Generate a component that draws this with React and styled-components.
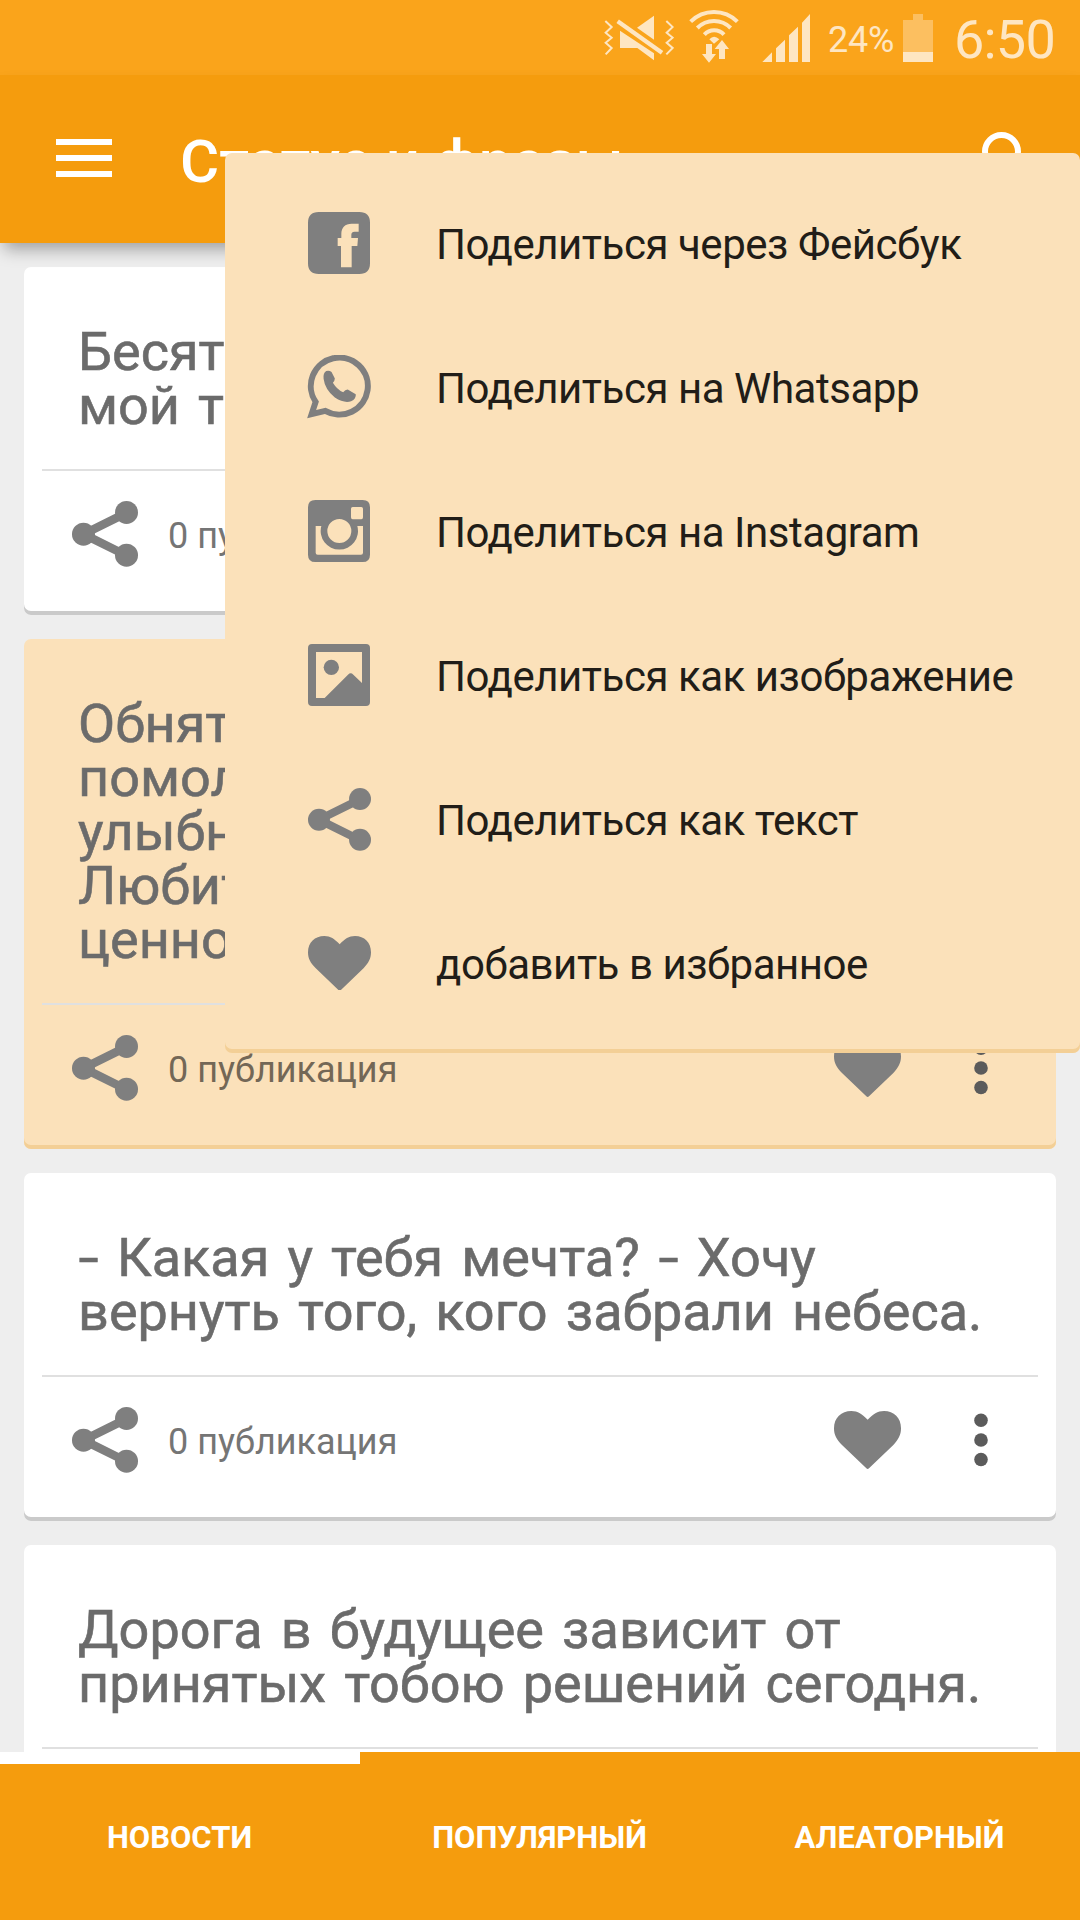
import React from 'react'
import styled, { createGlobalStyle } from 'styled-components'

const cards = [
  { id: 1, lines: ['Бесят', 'мой т'] },
  { id: 2, lines: ['Обнять', 'помолчать', 'улыбнуться', 'Любить', 'ценно'], selected: true },
  { id: 3, lines: ['- Какая у тебя мечта? - Хочу', 'вернуть того, кого забрали небеса.'] },
  { id: 4, lines: ['Дорога в будущее зависит от', 'принятых тобою решений сегодня.'] },
];

const tabs = ['НОВОСТИ', 'ПОПУЛЯРНЫЙ', 'АЛЕАТОРНЫЙ'];

const MuteIcon = () => (
  <svg width="70" height="46" viewBox="72 42 210 138" fill="#fee6c2">
    <g fill="none" stroke="#fee6c2" strokeWidth="6">
      <path d="M76 60 95 78 77 95 95 110 77 125 95 141 77 160" />
      <path d="M259 60 278 78 260 95 278 110 260 125 278 141 259 160" />
    </g>
    <path d="M171 80 222 44V116Z" />
    <path d="M120 89 222 157V178L172 141H120Z" />
    <path d="M113 61 246 155" stroke="#fee6c2" strokeWidth="13" />
  </svg>
);

const WifiIcon = () => (
  <svg width="50" height="54" viewBox="327 27 150 162" fill="#fee6c2">
    <g fill="none" stroke="#fee6c2" strokeWidth="12">
      <path d="M332 65A99 99 0 0 1 472 65" />
      <path d="M352 84A70 70 0 0 1 452 84" />
      <path d="M373 104A40 40 0 0 1 432 104" />
    </g>
    <path d="M388 118Q402 103 418 118L402 131Z" />
    <path d="M378 132H396V162H408L387 188 366 162H378Z" />
    <path d="M426 120 447 147H435V177H417V147H404Z" />
  </svg>
);

const SignalIcon = () => (
  <svg width="48" height="48" viewBox="546 39 144 144" fill="#fee6c2">
    <path d="M547 183 576 154V183ZM588 183V142L615 116V183ZM627 183V103L654 77V183ZM666 183V65L690 39V183Z" />
  </svg>
);

const BatteryIcon = () => (
  <svg width="30" height="48" viewBox="0 0 30 48">
    <path d="M10 0H20V6H30V38H0V6H10Z" fill="#fcbf60" />
    <path d="M0 38H30V48H0Z" fill="#fee6c2" />
  </svg>
);

const SearchIcon = () => (
  <svg width="72" height="72" viewBox="0 0 24 24" fill="#ffffff">
    <path d="M15.5 14h-.79l-.28-.27A6.471 6.471 0 0 0 16 9.5 6.5 6.5 0 1 0 9.5 16c1.61 0 3.09-.59 4.23-1.57l.27.28v.79l5 4.99L20.49 19l-4.99-5zm-6 0C7.01 14 5 11.99 5 9.5S7.01 5 9.5 5 14 7.01 14 9.5 11.99 14 9.5 14z" />
  </svg>
);

const ShareIcon = ({ size }) => (
  <svg width={size} height={size} viewBox="0 0 201 201" fill="#7f7f7f">
    <path d="M166 36 35 101 166 166" fill="none" stroke="#7f7f7f" strokeWidth="26" />
    <circle cx="35" cy="101" r="35" />
    <circle cx="166" cy="35" r="35" />
    <circle cx="166" cy="165" r="35" />
  </svg>
);

const HeartIcon = ({ width }) => (
  <svg width={width} height={width * 174 / 201} viewBox="0 0 201 174" fill="#7f7f7f">
    <path d="M105 172Q101 176 97 172L24 102C8 86 0 72 0 52 0 20 22 0 52 0 72 0 84 9 101 26 118 9 130 0 150 0 180 0 201 20 201 52 201 72 193 86 178 102Z" />
  </svg>
);

const MoreIcon = () => (
  <svg width="14" height="54" viewBox="0 0 14 54" fill="#5b5b5b">
    <circle cx="7" cy="7.3" r="6.8" />
    <circle cx="7" cy="27" r="6.8" />
    <circle cx="7" cy="46.5" r="6.8" />
  </svg>
);

const FacebookIcon = () => (
  <svg width="62" height="62" viewBox="0 0 186 186" fill="#7f7f7f" fillRule="evenodd">
    <path d="M32 0H154Q186 0 186 32V154Q186 186 154 186H32Q0 186 0 154V32Q0 0 32 0ZM99 102H89V78H100V66C100 46 111 35 131 35H152V59H140C132 59 130 63 130 69V78H150L148 102H131V166H99Z" />
  </svg>
);

const WhatsappIcon = () => (
  <svg width="64" height="64" viewBox="260 645 193 192" fill="#7f7f7f">
    <path d="M286 786A86 86 0 1 1 315 813L274 823Z" fill="none" stroke="#7f7f7f" strokeWidth="18" />
    <path d="M318 693Q327 690 334 696L344 715Q344 721 338 728 350 748 369 757 376 748 384 749L407 763Q409 777 393 784 372 791 344 773 314 748 310 716 308 700 318 693Z" />
  </svg>
);

const InstagramIcon = () => (
  <svg width="62" height="62" viewBox="0 0 186 186" fill="#7f7f7f" fillRule="evenodd">
    <path d="M22 0H164Q186 0 186 22V164Q186 186 164 186H22Q0 186 0 164V22Q0 0 22 0ZM134 21H160Q165 21 165 26V52Q165 58 160 58H134Q129 58 129 52V26Q129 21 134 21ZM23 78H40A56 56 0 1 0 148 78H165V158Q165 164 159 164H29Q23 164 23 158ZM94 57A36 36 0 1 0 94 129 36 36 0 1 0 94 57Z" />
  </svg>
);

const ImageIcon = () => (
  <svg width="62" height="62" viewBox="0 0 186 186" fill="#7f7f7f" fillRule="evenodd">
    <path d="M12 0H174Q186 0 186 12V174Q186 186 174 186H12Q0 186 0 174V12Q0 0 12 0ZM24 24V162H50L120 92Q128 84 136 92L162 117V24Z" />
    <circle cx="70" cy="70" r="23" />
  </svg>
);

const menuItems = [
  { label: 'Поделиться через Фейсбук', icon: <FacebookIcon /> },
  { label: 'Поделиться на Whatsapp', icon: <WhatsappIcon /> },
  { label: 'Поделиться на Instagram', icon: <InstagramIcon /> },
  { label: 'Поделиться как изображение', icon: <ImageIcon /> },
  { label: 'Поделиться как текст', icon: <ShareIcon size={63} /> },
  { label: 'добавить в избранное', icon: <HeartIcon width={63} /> },
];

const QuoteLine = ({ text }) => (
  <span>
    {text.split(/(-)/).map((part, i) => (part === '-' ? <Dash key={i}>-</Dash> : part))}
  </span>
);

const QuoteCard = ({ lines, selected }) => (
  <Card $selected={selected}>
    <Quote>
      {lines.map((line) => <QuoteLine key={line} text={line} />)}
    </Quote>
    <CardFooter>
      <ShareIcon size={66} />
      <ShareCount>0 публикация</ShareCount>
      <HeartIcon width={67} />
      <MoreBox><MoreIcon /></MoreBox>
    </CardFooter>
  </Card>
);

const App = () => {
  return (
    <Screen>
      <GlobalStyle />
      <StatusBar>
        <MuteIcon />
        <WifiBox><WifiIcon /></WifiBox>
        <SignalBox><SignalIcon /></SignalBox>
        <BatteryText>24%</BatteryText>
        <BatteryIcon />
        <Clock>6:50</Clock>
      </StatusBar>
      <AppBar>
        <Hamburger><i /><i /><i /></Hamburger>
        <Title>Статус и фразы</Title>
        <SearchIcon />
      </AppBar>
      <Feed>
        {cards.map((card) => <QuoteCard key={card.id} {...card} />)}
      </Feed>
      <TabBar>
        {tabs.map((tab, i) => <Tab key={tab} $active={i === 0}>{tab}</Tab>)}
      </TabBar>
      <Menu>
        {menuItems.map(({ label, icon }) => (
          <MenuItem key={label}>
            <MenuIcon>{icon}</MenuIcon>
            <MenuLabel>{label}</MenuLabel>
          </MenuItem>
        ))}
      </Menu>
    </Screen>
  )
}

export default App

const GlobalStyle = createGlobalStyle`
  * {
    box-sizing: border-box;
  }
  body {
    margin: 0;
    font-family: Roboto, 'Noto Sans', sans-serif;
  }
  svg {
    display: block;
    flex-shrink: 0;
  }
`;

const Screen = styled.div`
  width: 1080px;
  height: 1920px;
  position: relative;
  display: flex;
  flex-direction: column;
  overflow: hidden;
  background-color: #eeeeee;
`;

const StatusBar = styled.div`
  height: 75px;
  flex-shrink: 0;
  display: flex;
  justify-content: flex-end;
  align-items: center;
  padding-right: 25px;
  background-color: #faa41b;
  color: #fee6c2;
  white-space: nowrap;
`;

const WifiBox = styled.div`
  margin: 0 23px 3px 15px;
`;

const SignalBox = styled.div`
  margin-right: 18px;
`;

const BatteryText = styled.span`
  width: 75px;
  font-size: 36px;
  line-height: 42px;
  padding-top: 4px;
  letter-spacing: -0.2px;
`;

const Clock = styled.span`
  width: 101px;
  margin-left: 21px;
  font-size: 54px;
  line-height: 60px;
  padding-top: 4px;
  letter-spacing: -0.8px;
`;

const AppBar = styled.div`
  height: 168px;
  flex-shrink: 0;
  position: relative;
  z-index: 1;
  display: flex;
  align-items: center;
  padding: 0 35px 0 56px;
  background-color: #f59c0d;
  box-shadow: 0 10px 16px -4px rgba(0, 0, 0, 0.34);
`;

const Hamburger = styled.div`
  width: 56px;
  margin-bottom: 2px;
  display: flex;
  flex-direction: column;
  gap: 10px;
  i {
    height: 6px;
    background-color: #ffffff;
  }
`;

const Title = styled.h1`
  flex: 1;
  margin: 6px 0 0 68px;
  font-size: 60px;
  font-weight: 500;
  line-height: 70px;
  color: #ffffff;
`;

const Feed = styled.div`
  flex: 1;
  min-height: 0;
  overflow: hidden;
  display: flex;
  flex-direction: column;
  gap: 24px;
  padding: 24px 24px 0;
`;

const Card = styled.div`
  flex-shrink: 0;
  padding-bottom: 18px;
  border-radius: 7px;
  background-color: ${({ $selected }) => ($selected ? '#fbe1ba' : '#ffffff')};
  box-shadow: inset 0 -4px 0 ${({ $selected }) => ($selected ? '#f3cf96' : '#cacaca')};
  color: ${({ $selected }) => ($selected ? '#736756' : '#757575')};
`;

const Quote = styled.p`
  display: flex;
  flex-direction: column;
  margin: 0;
  padding: 58px 54px 36px;
  font-size: 54px;
  line-height: 54px;
  color: #6b6b6b;
  white-space: nowrap;
  word-spacing: 4.7px;
  -webkit-text-stroke: 0.6px #6b6b6b;
`;

const Dash = styled.span`
  display: inline-block;
  margin: 0 3px;
  transform: scaleX(1.35);
`;

const CardFooter = styled.div`
  height: 128px;
  margin: 0 18px;
  padding: 0 50px 0 30px;
  display: flex;
  align-items: center;
  border-top: 2px solid #e0e0e0;
`;

const ShareCount = styled.span`
  flex: 1;
  margin-left: 30px;
  padding-top: 4px;
  font-size: 36px;
  line-height: 42px;
`;

const MoreBox = styled.div`
  margin-left: 73px;
`;

const TabBar = styled.div`
  height: 168px;
  flex-shrink: 0;
  display: flex;
  background-color: #f59c0d;
`;

const Tab = styled.div`
  flex: 1;
  display: flex;
  align-items: center;
  justify-content: center;
  padding: 2px 1px 0 0;
  box-shadow: ${({ $active }) => ($active ? 'inset 0 12px 0 #ffffff' : 'none')};
  font-size: 31px;
  font-weight: 700;
  color: #ffffff;
`;

const Menu = styled.div`
  width: 855px;
  height: 900px;
  position: absolute;
  top: 153px;
  right: 0;
  z-index: 2;
  padding: 18px 0;
  border-radius: 7px;
  background-color: #fbe1ba;
  box-shadow: inset 0 -4px 0 #f3cf96;
`;

const MenuItem = styled.div`
  height: 144px;
  display: flex;
  align-items: center;
`;

const MenuIcon = styled.div`
  width: 64px;
  margin-left: 82px;
  display: flex;
  justify-content: center;
`;

const MenuLabel = styled.span`
  margin-left: 65px;
  padding-top: 4px;
  font-size: 42px;
  line-height: 48px;
  letter-spacing: -0.46px;
  color: #211d18;
  white-space: nowrap;
`;
